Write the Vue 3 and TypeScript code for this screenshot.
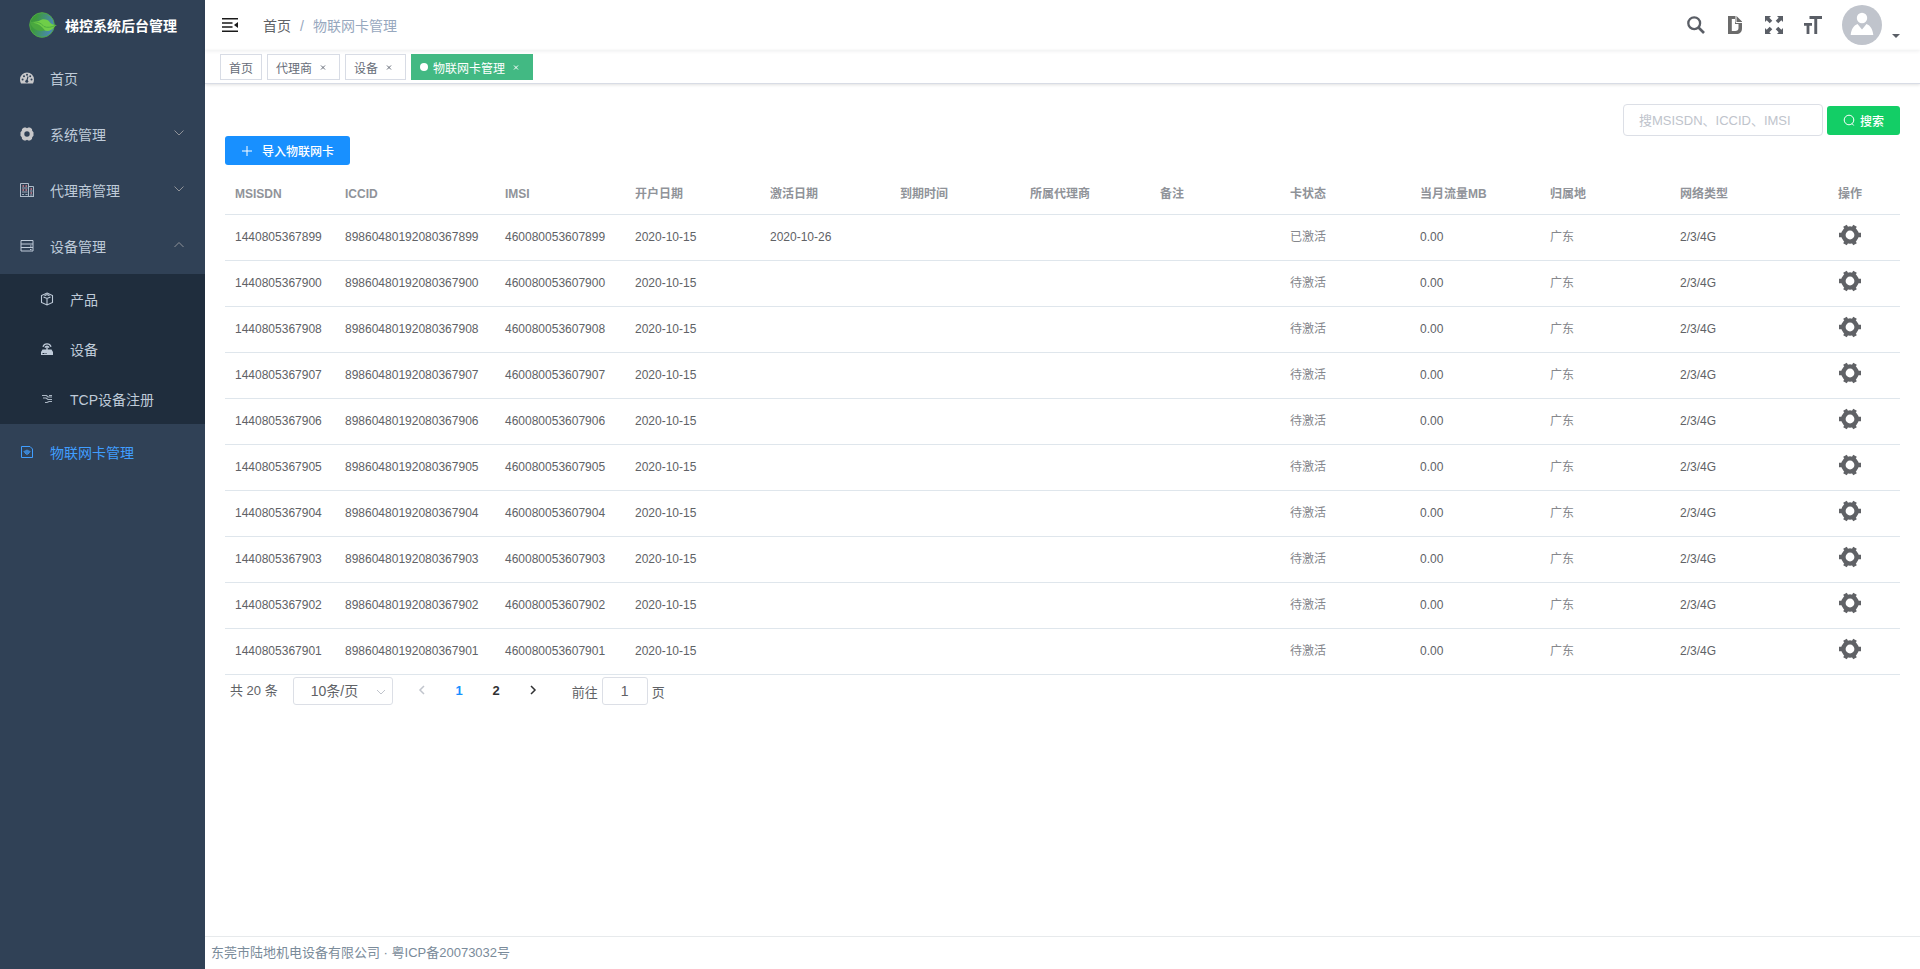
<script setup lang="ts">
import { ref } from 'vue'

interface Card {
  msisdn: string
  iccid: string
  imsi: string
  opened: string
  activated: string
  status: string
  usage: string
  region: string
  network: string
}

const suffixes = ['899', '900', '908', '907', '906', '905', '904', '903', '902', '901']
const cards: Card[] = suffixes.map((s, i) => ({
  msisdn: '1440805367' + s,
  iccid: '89860480192080367' + s,
  imsi: '460080053607' + s,
  opened: '2020-10-15',
  activated: i === 0 ? '2020-10-26' : '',
  status: i === 0 ? '已激活' : '待激活',
  usage: '0.00',
  region: '广东',
  network: '2/3/4G',
}))

const columns = ['MSISDN', 'ICCID', 'IMSI', '开户日期', '激活日期', '到期时间', '所属代理商', '备注', '卡状态', '当月流量MB', '归属地', '网络类型']
const tags = [
  { title: '首页', closable: false, active: false },
  { title: '代理商', closable: true, active: false },
  { title: '设备', closable: true, active: false },
  { title: '物联网卡管理', closable: true, active: true },
]
const keyword = ref('')
const pageSize = ref('10')
const jump = ref('1')
</script>

<template>
  <div class="app">
    <aside class="sidebar">
      <a class="logo" href="#">
        <svg class="logo-mark" viewBox="0 0 28 28" aria-hidden="true">
          <defs>
            <linearGradient id="globe" x1="0" y1="0" x2="1" y2="0.3">
              <stop offset="0.3" stop-color="#3c9a3c" />
              <stop offset="1" stop-color="#4a86b4" />
            </linearGradient>
          </defs>
          <circle cx="13" cy="14" r="12.3" fill="url(#globe)" stroke="#4fa845" stroke-width="1" />
          <path d="M10 10c4-3 9-1.500 11 1.500 2 2 4 2.500 7 2.500-3 1-4 5.500-9.500 6C14 20 11 16 4 11.500c2-1 4-1.500 6-1.500z" fill="#6fce48" />
          <path d="M1.500 12.500C6 10.500 12 14 16 19.500 9 21 4 18.500 1.500 12.500z" fill="#4aa83f" />
          <path d="M2 12c5-2.500 10 0 13 3.500 3 1.500 8 1 12-1.500" fill="none" stroke="#4fae42" stroke-width="1" />
        </svg>
        <span>梯控系统后台管理</span>
      </a>
      <nav>
        <a class="item" href="#">
          <svg class="icon" viewBox="0 0 14 14" aria-hidden="true">
            <path d="M7 1.500A7 7 0 0 0 0 8.500c0 1.500.3 2.800 1 4h12c.7-1.200 1-2.500 1-4a7 7 0 0 0-7-7z" fill="#c8c8ca" />
            <g fill="#304156"><circle cx="2.600" cy="8.600" r="1" /><circle cx="4" cy="5.200" r="1" /><circle cx="7" cy="3.700" r="1" /><circle cx="10.200" cy="5.200" r="1" /><circle cx="11.500" cy="8.600" r="1" /><circle cx="6.800" cy="10.200" r="1.500" /></g>
            <path d="M6.800 10 8 5.500" stroke="#304156" stroke-width="1.100" />
          </svg>
          <span>首页</span>
        </a>
        <a class="item" href="#">
          <svg class="icon" viewBox="0 0 14 14" aria-hidden="true">
            <path fill-rule="evenodd" d="M4 .5h1.800L7 1.300 8.200.5H10l2 1.500.2 1.800 1.300 1.400v3.600l-1.300 1.400L12 12l-2 1.500H8.200L7 12.700l-1.200.8H4L2 12l-.2-1.800L.5 8.800V5.200l1.300-1.400L2 2zM7 4.300a2.700 2.700 0 1 0 0 5.400 2.700 2.700 0 0 0 0-5.400z" fill="#c8c8ca" />
          </svg>
          <span>系统管理</span>
          <svg class="arrow" viewBox="0 0 12 12" aria-hidden="true"><path d="M1.500 3.500 6 8l4.500-4.500" /></svg>
        </a>
        <a class="item" href="#">
          <svg class="icon" viewBox="0 0 14 14" aria-hidden="true">
            <path d="M.5 13.500V.5h8v13zM8.500 3.500h5v10h-5zM0 13.500h14" fill="none" stroke="#aebbc9" />
            <path d="M2.500 3h1.500M5.500 3H7M2.500 7h1.500M5.500 7H7M10.500 6H12M10.500 10H12" stroke="#d68491" stroke-width="1.600" />
            <path d="M2 5h5.500M2 9h5.500M2 11.500h2M5.500 11.500h2M10 8h2.500M10 12h2.500" stroke="#9dabba" />
          </svg>
          <span>代理商管理</span>
          <svg class="arrow" viewBox="0 0 12 12" aria-hidden="true"><path d="M1.500 3.500 6 8l4.500-4.500" /></svg>
        </a>
        <a class="item" href="#">
          <svg class="icon" viewBox="0 0 14 14" aria-hidden="true">
            <path d="M1 1.500h12v10.500H1zM1 5h12M1 8.500h12" fill="none" stroke="#bfcbd9" />
            <path d="M10 7h1.500M10 10.500h1.500" stroke="#bfcbd9" />
          </svg>
          <span>设备管理</span>
          <svg class="arrow" viewBox="0 0 12 12" aria-hidden="true"><path d="M1.500 8 6 3.500 10.500 8" /></svg>
        </a>
        <div class="submenu">
          <a class="item" href="#">
            <svg class="icon" viewBox="0 0 14 14" aria-hidden="true">
              <path d="M7 1l5.500 2.500v7L7 13l-5.500-2.500v-7zM3.500 5 7 6.500 10.500 5M7 6.500v6M4.500 3.800 7 2.600l2.500 1.200" fill="none" stroke="#bfcbd9" stroke-width="1.100" />
            </svg>
            <span>产品</span>
          </a>
          <a class="item" href="#">
            <svg class="icon" viewBox="0 0 14 14" aria-hidden="true">
              <path d="M2.500 7.500h9L13 10v3H1v-3z" fill="#bfcbd9" />
              <path d="M3 4.800a4.200 4.200 0 0 1 8 0M5 5.600a2.200 2.200 0 0 1 4 0M7 5v3" fill="none" stroke="#bfcbd9" stroke-width="1.400" />
              <path d="M2.500 11.500h2M5.500 11.500h1" stroke="#1f2d3d" />
            </svg>
            <span>设备</span>
          </a>
          <a class="item" href="#">
            <svg class="icon" viewBox="0 0 14 14" aria-hidden="true">
              <path d="M2 3.500h4.500L8 5h4M3 6h3l2 1.500h4M12 3.500H9M5 10.500h2L9 9.500h3" fill="none" stroke="#aab6c3" stroke-width="1.200" />
            </svg>
            <span>TCP设备注册</span>
          </a>
        </div>
        <a class="item current" href="#" aria-current="page">
          <svg class="icon" viewBox="0 0 14 14" aria-hidden="true">
            <path d="M1.500 1.500h8.500l2.500 2.500v8.500h-11z" fill="none" stroke="#409eff" />
            <path d="M3 6.500 7 4.500l4 2L7 9z" fill="#409eff" opacity=".7" />
            <path d="M4.500 7.500 7 9.500l2.500-2" fill="none" stroke="#409eff" />
          </svg>
          <span>物联网卡管理</span>
        </a>
      </nav>
    </aside>

    <div class="main">
      <header class="navbar">
        <button class="icon-button fold" type="button" aria-label="收起菜单">
          <svg viewBox="0 0 16 16" aria-hidden="true">
            <path d="M0 1.800h16M0 6h10.500M0 10h10.500M0 14.200h16" stroke="#1a1a1a" stroke-width="1.600" />
            <path d="M16 5v6l-4-3z" fill="#1a1a1a" />
          </svg>
        </button>
        <nav class="breadcrumb" aria-label="路径">
          <a href="#">首页</a><span class="slash">/</span><span>物联网卡管理</span>
        </nav>
        <div class="tools">
          <button class="icon-button" type="button" aria-label="查找">
            <svg viewBox="0 0 18 18" aria-hidden="true"><circle cx="7.200" cy="7.200" r="5.900" fill="none" stroke="#5a5e66" stroke-width="2.300" /><path d="m11.500 11.500 5.500 5.500" stroke="#5a5e66" stroke-width="2.700" /></svg>
          </button>
          <button class="icon-button" type="button" aria-label="文档">
            <svg viewBox="0 0 18 18" aria-hidden="true">
              <path fill-rule="evenodd" d="M2 0h8.500L16 5.500V12c0 4-2 6-6 6H2zM5.800 3v12h3.400c2.200 0 3.300-1 3.300-3V8H9V3z" fill="#6b6b6b" />
              <path d="M10 0v6.500h6.500" fill="none" stroke="#fff" />
            </svg>
          </button>
          <button class="icon-button" type="button" aria-label="全屏">
            <svg viewBox="0 0 18 18" aria-hidden="true"><path d="M0 0h6L4.300 1.700l3 3-2.600 2.600-3-3L0 6zM18 0v6l-1.700-1.700-3 3-2.600-2.600 3-3L12 0zM0 18v-6l1.700 1.700 3-3 2.600 2.600-3 3L6 18zM18 18h-6l1.700-1.700-3-3 2.600-2.600 3 3L18 12z" fill="#5a5e66" /></svg>
          </button>
          <button class="icon-button" type="button" aria-label="字号">
            <svg viewBox="0 0 18 18" aria-hidden="true"><path d="M5.500 0H18v3h-4.800v15h-2.900V3H5.500zM0 7h8v2.800H5.400V18H2.600V9.800H0z" fill="#5a5e66" /></svg>
          </button>
        </div>
        <button class="user" type="button" aria-label="用户">
          <svg class="avatar" viewBox="0 0 40 40" aria-hidden="true">
            <circle cx="20" cy="20" r="20" fill="#c0c4cc" />
            <circle cx="20" cy="13" r="5.200" fill="#fff" />
            <path d="M8.700 30c.5-5.500 2.800-9.500 6.800-11l4.500 5.500 4.500-5.500c4 1.500 6.300 5.500 6.800 11z" fill="#fff" />
          </svg>
          <svg class="caret" viewBox="0 0 8 4" aria-hidden="true"><path d="M0 0h8L4 4z" fill="#5a5e66" /></svg>
        </button>
      </header>

      <div class="tags">
        <a v-for="t in tags" :key="t.title" class="tag" :class="{ active: t.active }" href="#">
          <i v-if="t.active" class="dot"></i>
          <span>{{ t.title }}</span>
          <svg v-if="t.closable" class="close" viewBox="0 0 16 16" aria-hidden="true"><path d="m6 6.500 4 4M10 6.500l-4 4" /></svg>
        </a>
      </div>

      <main class="content">
        <form class="search" @submit.prevent>
          <input v-model="keyword" type="text" placeholder="搜MSISDN、ICCID、IMSI" aria-label="搜MSISDN、ICCID、IMSI" />
          <button class="button green" type="submit">
            <svg viewBox="0 0 12 12" aria-hidden="true"><circle cx="6" cy="6" r="4.800" fill="none" stroke="#fff" /><path d="m9 9.500 1.700 2" stroke="#fff" /></svg>
            <span>搜索</span>
          </button>
        </form>
        <button class="button blue" type="button">
          <svg viewBox="0 0 12 12" aria-hidden="true"><path d="M6 1v10M1 6h10" stroke="#fff" /></svg>
          <span>导入物联网卡</span>
        </button>

        <table class="table">
          <colgroup>
            <col class="w-msisdn" /><col class="w-iccid" /><col /><col class="w-opened" />
            <col v-for="n in 8" :key="n" /><col class="w-action" />
          </colgroup>
          <thead>
            <tr>
              <th v-for="c in columns" :key="c" scope="col">{{ c }}</th>
              <th class="center" scope="col">操作</th>
            </tr>
          </thead>
          <tbody>
            <tr v-for="c in cards" :key="c.msisdn">
              <td>{{ c.msisdn }}</td>
              <td>{{ c.iccid }}</td>
              <td>{{ c.imsi }}</td>
              <td>{{ c.opened }}</td>
              <td>{{ c.activated }}</td>
              <td></td>
              <td></td>
              <td></td>
              <td class="light">{{ c.status }}</td>
              <td>{{ c.usage }}</td>
              <td class="light">{{ c.region }}</td>
              <td>{{ c.network }}</td>
              <td class="action">
                <button class="icon-button gear" type="button" aria-label="操作">
                  <svg viewBox="0 0 22 22" aria-hidden="true">
                    <circle cx="11" cy="11" r="6.600" fill="none" stroke="#606266" stroke-width="4.400" />
                    <path d="M0 8.800h4v4.400H0zM18 8.800h4v4.400h-4zM4.200 2.800 7.800.8l2 3.500-3.600 2zM17.800 2.800 14.200.8l-2 3.500 3.600 2zM4.200 19.200l3.600 2 2-3.500-3.600-2zM17.800 19.200l-3.600 2-2-3.500 3.600-2z" fill="#606266" />
                  </svg>
                </button>
              </td>
            </tr>
          </tbody>
        </table>

        <div class="pagination">
          <span class="total">共 20 条</span>
          <span class="select">
            <select v-model="pageSize" aria-label="每页条数">
              <option value="10">10条/页</option>
              <option value="20">20条/页</option>
            </select>
            <svg viewBox="0 0 12 12" aria-hidden="true"><path d="M2 4l4 4 4-4" /></svg>
          </span>
          <div class="pager">
            <button type="button" disabled aria-label="上一页"><svg viewBox="0 0 12 12" aria-hidden="true"><path d="M8 2 4 6l4 4" /></svg></button>
            <button type="button" class="on">1</button>
            <button type="button">2</button>
            <button type="button" aria-label="下一页"><svg viewBox="0 0 12 12" aria-hidden="true"><path d="m4 2 4 4-4 4" /></svg></button>
          </div>
          <label class="jump">前往<input v-model="jump" type="text" />页</label>
        </div>
      </main>

      <footer class="footer">东莞市陆地机电设备有限公司 · 粤ICP备20073032号</footer>
    </div>
  </div>
</template>

<style>
body {
  margin: 0;
  background: #fff;
}
</style>

<style scoped>
.app {
  display: flex;
  min-height: 100vh;
  font-family: "Liberation Sans", "Noto Sans CJK SC", sans-serif;
  font-size: 14px;
  color: #606266;
}
.app *,
.app *::before {
  box-sizing: border-box;
}
a {
  color: inherit;
  text-decoration: none;
}
button,
input,
select {
  font-family: inherit;
  margin: 0;
}
svg {
  display: block;
  flex: none;
}
.sidebar {
  flex: none;
  width: 205px;
  background: #304156;
  color: #bfcbd9;
}
.logo {
  display: flex;
  align-items: center;
  gap: 8px;
  height: 50px;
  padding-left: 29px;
  color: #fff;
  font-weight: bold;
}
.logo-mark {
  width: 28px;
  height: 28px;
}
.item {
  display: flex;
  align-items: center;
  height: 56px;
  padding: 0 20px;
}
.icon {
  width: 14px;
  height: 14px;
  margin-right: 16px;
}
.arrow {
  width: 12px;
  height: 12px;
  margin-left: auto;
  margin-bottom: 2px;
  fill: none;
  stroke: #909399;
}
.submenu {
  background: #1f2d3d;
}
.submenu .item {
  height: 50px;
  padding-left: 40px;
}
.current {
  color: #409eff;
}
.main {
  flex: 1;
  min-width: 0;
  display: flex;
  flex-direction: column;
}
.navbar {
  display: flex;
  align-items: center;
  height: 50px;
  padding: 0 20px 0 17px;
  box-shadow: 0 1px 4px rgba(0, 21, 41, 0.08);
}
.icon-button {
  display: flex;
  justify-content: center;
  align-items: center;
  padding: 0;
  border: 0;
  background: none;
  cursor: pointer;
}
.fold svg {
  width: 16px;
  height: 16px;
}
.breadcrumb {
  display: flex;
  align-items: baseline;
  margin-left: 25px;
  color: #97a8be;
}
.breadcrumb a {
  color: #606266;
}
.slash {
  margin: 0 9px;
}
.tools {
  display: flex;
  margin-left: auto;
}
.tools .icon-button {
  width: 39px;
  height: 40px;
}
.tools svg {
  width: 18px;
  height: 18px;
}
.user {
  display: flex;
  align-items: flex-end;
  gap: 10px;
  margin-left: 10px;
  padding: 0;
  border: 0;
  background: none;
}
.avatar {
  width: 40px;
  height: 40px;
}
.caret {
  width: 8px;
  height: 4px;
  margin-bottom: 7px;
}
.tags {
  display: flex;
  align-items: flex-start;
  gap: 5px;
  height: 34px;
  padding: 4px 15px 0;
  border-bottom: 1px solid #d8dce5;
  box-shadow: 0 1px 3px rgba(0, 0, 0, 0.12);
  font-size: 12px;
}
.tag {
  display: flex;
  align-items: center;
  height: 26px;
  padding: 0 8px;
  border: 1px solid #d8dce5;
  color: #666c78;
}
.tag.active {
  border-color: #42b983;
  background: #42b983;
  color: #fff;
}
.dot {
  width: 8px;
  height: 8px;
  margin-right: 5px;
  border-radius: 50%;
  background: #fff;
}
.close {
  width: 16px;
  height: 16px;
  margin-left: 3px;
  stroke: currentColor;
}
.content {
  flex: 1;
  padding: 20px;
}
.search {
  display: flex;
  align-items: center;
  justify-content: flex-end;
  gap: 4px;
}
.search input {
  width: 200px;
  height: 32px;
  padding: 0 15px;
  border: 1px solid #dcdfe6;
  border-radius: 4px;
  font-size: 13px;
  color: #606266;
}
.search input::placeholder {
  color: #c0c4cc;
}
.button {
  display: flex;
  align-items: center;
  height: 29px;
  padding: 0 16px;
  border: 0;
  border-radius: 3px;
  color: #fff;
  font-size: 12px;
  font-weight: 500;
}
.button svg {
  width: 12px;
  height: 12px;
}
.green {
  gap: 5px;
  background: #13ce66;
}
.blue {
  gap: 9px;
  background: #1890ff;
}
.table {
  width: 100%;
  margin-top: 6px;
  table-layout: fixed;
  border-collapse: separate;
  border-spacing: 0;
  font-size: 12px;
  line-height: 20px;
}
.w-msisdn {
  width: 110px;
}
.w-iccid {
  width: 160px;
}
.w-opened {
  width: 135px;
}
.w-action {
  width: 100px;
}
.table th,
.table td {
  height: 46px;
  padding: 0 10px 2px;
  border-bottom: 1px solid #dfe6ec;
  text-align: left;
  white-space: nowrap;
}
.table th {
  height: 44px;
  padding: 2px 10px 0;
  color: #909399;
  font-weight: bold;
}
.table th.center {
  text-align: center;
}
.table .light {
  color: #85878c;
}
.table .action {
  padding-bottom: 6px;
}
.gear {
  margin: 0 auto;
}
.gear svg {
  width: 22px;
  height: 22px;
}
.pagination {
  display: flex;
  align-items: center;
  padding: 2px 5px;
  font-size: 13px;
}
.total {
  padding-bottom: 4px;
}
.select {
  position: relative;
  margin-left: 15px;
}
.select select {
  display: block;
  width: 100px;
  height: 28px;
  padding: 0 0 0 17px;
  border: 1px solid #dcdfe6;
  border-radius: 3px;
  background: #fff;
  appearance: none;
  font-size: 14px;
  color: #606266;
}
.select svg {
  position: absolute;
  top: 9px;
  right: 6px;
  width: 12px;
  height: 12px;
  fill: none;
  stroke: #c0c4cc;
  pointer-events: none;
}
.pager {
  display: flex;
  gap: 4px;
  margin: 0 22px 0 13px;
}
.pager button {
  display: flex;
  align-items: center;
  justify-content: center;
  width: 33px;
  height: 28px;
  padding: 0 0 2px;
  border: 0;
  background: none;
  color: #303133;
  font-size: 13px;
  font-weight: bold;
}
.pager .on {
  color: #1890ff;
}
.pager button:disabled {
  color: #c0c4cc;
}
.pager svg {
  width: 12px;
  height: 12px;
  fill: none;
  stroke: currentColor;
  stroke-width: 1.5;
}
.jump {
  display: flex;
  align-items: center;
  gap: 4px;
}
.jump input {
  width: 46px;
  height: 28px;
  padding: 0;
  border: 1px solid #dcdfe6;
  border-radius: 3px;
  text-align: center;
  font-size: 14px;
  color: #606266;
}
.footer {
  height: 33px;
  padding: 0 6px;
  border-top: 1px solid #e7eaec;
  color: #7a8b9a;
  font-size: 13px;
  line-height: 32px;
}
</style>
